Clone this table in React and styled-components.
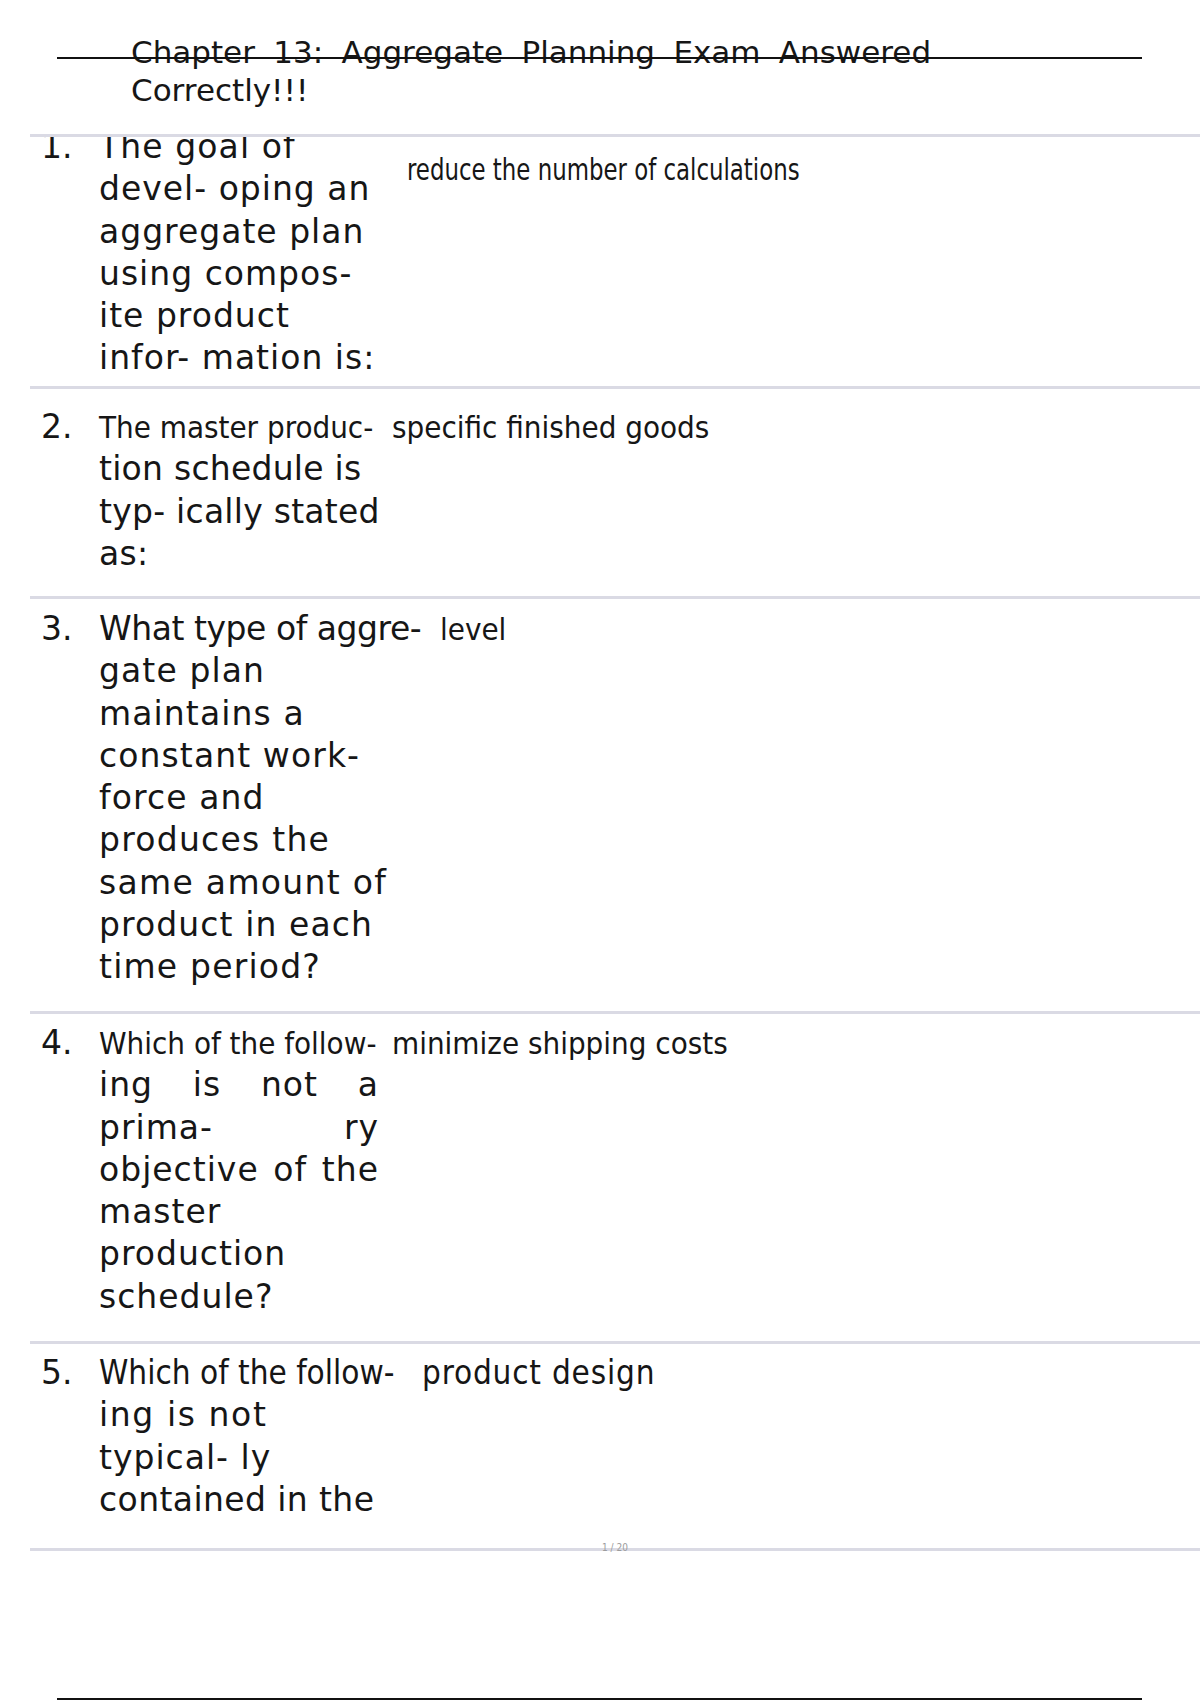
import React from "react";
import styled, { createGlobalStyle } from "styled-components";

const GlobalStyle = createGlobalStyle`
  html, body {
    margin: 0;
    padding: 0;
    background: #fff;
  }
  body {
    font-family: "DejaVu Sans", "Liberation Sans", sans-serif;
    color: #161616;
  }
`;

const lineColor = "#dadae4";

const Page = styled.div`
  width: 1200px;
  height: 1700px;
  overflow: hidden;
`;

const Header = styled.header`
  position: relative;
  padding: 33px 0 0 131px;
  font-size: 31px;
  line-height: 38px;
  word-spacing: 8.5px;
`;

const HeaderRule = styled.div`
  position: absolute;
  left: 57px;
  top: 57px;
  width: 1085px;
  height: 2px;
  background: #111;
`;

const Table = styled.div`
  position: relative;
  margin: 25px 0 0 30px;
  border-bottom: 3px solid ${lineColor};
`;

const Row = styled.div`
  box-sizing: border-box;
  height: ${({ $h }) => $h}px;
  border-top: 3px solid ${lineColor};
  overflow: hidden;
  padding-left: 11px;
`;

const RowBody = styled.div`
  display: grid;
  grid-template-columns: 58px ${({ $q }) => $q}px 1fr;
  align-items: start;
  margin-top: ${({ $top }) => $top}px;
  font-size: 33px;
  line-height: 42.3px;
`;

const Num = styled.div`
  white-space: nowrap;
`;

const Question = styled.div`
  white-space: nowrap;
`;

const QLine = styled.div`
  letter-spacing: ${({ $ls }) => $ls}px;
  width: ${({ $just }) => ($just ? "280px" : "auto")};
  text-align: ${({ $just }) => ($just ? "justify" : "left")};
  text-align-last: ${({ $just }) => ($just ? "justify" : "auto")};
`;

const Cond = styled.span`
  display: inline-block;
  font-family: "DejaVu Sans Condensed", "DejaVu Sans", sans-serif;
  font-stretch: condensed;
  font-size: ${({ $fs }) => $fs}px;
  letter-spacing: ${({ $ls }) => $ls || 0}px;
  transform: scaleX(${({ $sx }) => $sx || 1});
  transform-origin: left center;
`;

const Answer = styled.div`
  margin-top: ${({ $top }) => $top || 0}px;
  white-space: nowrap;
`;

const PageNum = styled.div`
  position: absolute;
  left: 50%;
  bottom: -6px;
  transform: translateX(-50%);
  font-family: "DejaVu Sans Condensed", "DejaVu Sans", sans-serif;
  font-size: 10px;
  line-height: 12px;
  color: #9c9c9c;
`;

const BottomRule = styled.div`
  margin: 147px 0 0 57px;
  width: 1085px;
  height: 2px;
  background: #111;
`;

const rows = [
  {
    h: 252, top: -11, q: 308, ls: 1,
    lines: [{ t: "The goal of", ls: 1.1 }, "devel- oping an", "aggregate plan", "using compos-", "ite product", "infor- mation is:"],
    answer: { t: "reduce the number of calculations", fs: 31, sx: 0.82 }, aTop: 22,
  },
  {
    h: 210, top: 17, q: 293, ls: 0.25,
    lines: [{ t: "The master produc-", cond: 31 }, "tion schedule is", "typ- ically stated", "as:"],
    answer: { t: "specific finished goods", fs: 31 },
  },
  {
    h: 415, top: 9, q: 341, ls: 1.1,
    lines: [{ t: "What type of aggre-", ls: -0.45 }, "gate plan", "maintains a", "constant work-", "force and", { t: "produces the", ls: 1.25 }, { t: "same amount of", ls: 1.3 }, "product in each", { t: "time period?", ls: 1.2 }],
    answer: { t: "level", fs: 31 },
  },
  {
    h: 330, top: 8, q: 293, ls: 1,
    lines: [{ t: "Which of the follow-", cond: 31 }, { t: "ing is not a", just: true }, { t: "prima- ry", just: true }, { t: "objective of the", just: true }, "master", "production", "schedule?"],
    answer: { t: "minimize shipping costs", fs: 31 },
  },
  {
    h: 207, top: 8, q: 323, ls: 1,
    lines: [{ t: "Which of the follow-", cond: 33 }, { t: "ing is not", ls: 1.6 }, "typical- ly", { t: "contained in the", ls: 0.4 }],
    answer: { t: "product design", fs: 33, ls: 0.8 },
  },
];

function Item({ n, row }) {
  const a = row.answer;
  return (
    <Row $h={row.h}>
      <RowBody $top={row.top} $q={row.q}>
        <Num>{n}.</Num>
        <Question>
          {row.lines.map((l, i) => {
            const line = typeof l === "string" ? { t: l } : l;
            const ls = line.ls !== undefined ? line.ls : row.ls;
            return (
              <QLine key={i} $just={line.just} $ls={line.cond ? 0 : ls}>
                {line.cond ? <Cond $fs={line.cond}>{line.t}</Cond> : line.t}
              </QLine>
            );
          })}
        </Question>
        <Answer $top={row.aTop}>
          <Cond $fs={a.fs} $sx={a.sx} $ls={a.ls}>{a.t}</Cond>
        </Answer>
      </RowBody>
    </Row>
  );
}

export default function App() {
  return (
    <Page>
      <GlobalStyle />
      <Header>
        <HeaderRule />
        <div>Chapter 13: Aggregate Planning Exam Answered</div>
        <div>Correctly!!!</div>
      </Header>
      <Table>
        {rows.map((row, i) => (
          <Item key={i} n={i + 1} row={row} />
        ))}
        <PageNum>1 / 20</PageNum>
      </Table>
      <BottomRule />
    </Page>
  );
}
